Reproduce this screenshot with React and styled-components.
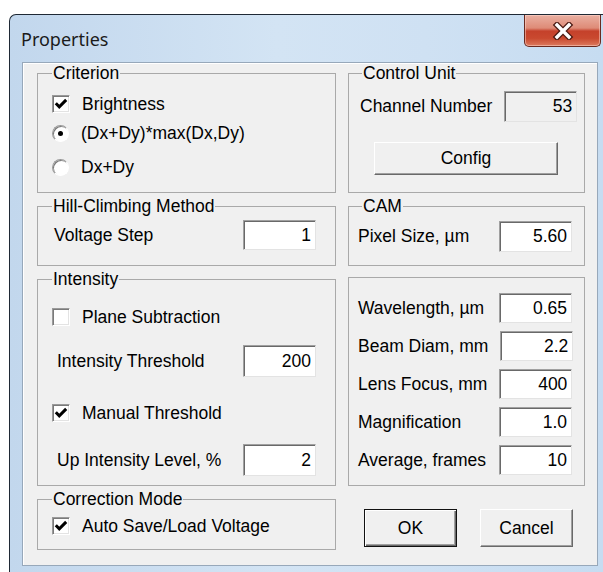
import React from "react";
import styled, { createGlobalStyle } from "styled-components";

// Properties dialog: classic Win32 controls inside a Win7 window frame

const GlobalStyle = createGlobalStyle`
  body {
    margin: 0;
    background: #fff;
    font-family: "Liberation Sans", Arial, sans-serif;
  }
`;

const Window = styled.div`
  box-sizing: border-box;
  margin: 14px 0 0 9px;
  width: 594px;
  height: 558px;
  border-top: 1px solid #1f2935;
  border-left: 1px solid #1f2935;
  border-top-left-radius: 7px;
  background: linear-gradient(90deg, #c2d7ed 0%, #d3e4f4 45%, #cfe1f3 70%, #c6dcf1 100%);
  padding: 0 5px 6px 12px;
  display: flex;
  flex-direction: column;
`;

const TitleBar = styled.div`
  height: 47px;
  display: flex;
  justify-content: space-between;
  align-items: flex-start;
  margin: 0 -3px 0 -1px;
`;

const Title = styled.div`
  padding-top: 13px;
  font-family: "Noto Sans", "Open Sans", sans-serif;
  font-size: 18px;
  line-height: 22px;
  color: #1b1b1b;
`;

const CloseButton = styled.div`
  box-sizing: border-box;
  width: 77px;
  height: 32px;
  border: 1px solid #6a2a20;
  border-top: none;
  border-radius: 0 0 5px 5px;
  background: linear-gradient(
    180deg,
    #eab0a2 0%,
    #de8b77 42%,
    #c5412b 52%,
    #c9492f 75%,
    #dc7a5e 100%
  );
  box-shadow: inset 0 0 0 1px rgba(255, 220, 210, 0.5);
  display: flex;
  align-items: center;
  justify-content: center;
`;

const Client = styled.div`
  flex: 1;
  box-sizing: border-box;
  background: #f0f0f0;
  border: 1px solid #97a8ba;
  box-shadow: inset 1px 1px 0 #fff;
  padding: 0 12px 0 14px;
  display: grid;
  grid-template-columns: 299px 237px;
  grid-template-rows: 130px 70px 217px 61px;
  column-gap: 12px;
  row-gap: 3px;
`;

const Group = styled.fieldset`
  box-sizing: border-box;
  margin: ${(p) => p.$mt || 0}px 0 0 0;
  min-width: 0;
  border: 1px solid #a9a9a9;
  padding: ${(p) => p.$pt || 0}px ${(p) => p.$pr || 12}px 0 ${(p) => p.$pl || 14}px;
  display: flex;
  flex-direction: column;
  gap: ${(p) => p.$gap || 0}px;
`;

const Legend = styled.legend`
  padding: 0 1px;
  margin-left: ${(p) => p.$ml || 0}px;
  font-size: 17.5px;
  line-height: 20px;
  color: #000;
`;

const Row = styled.div`
  display: flex;
  align-items: center;
  justify-content: ${(p) => (p.$spread ? "space-between" : p.$center ? "center" : "flex-start")};
  height: ${(p) => p.$h || 28}px;
  margin-top: ${(p) => p.$mt || 0}px;
  gap: 12px;
`;

const Label = styled.span`
  font-size: 17.5px;
  color: #000;
  padding-left: ${(p) => p.$pl || 0}px;
  white-space: nowrap;
`;

const Field = styled.input`
  box-sizing: border-box;
  width: 73px;
  height: ${(p) => p.$h || 31}px;
  margin: 0;
  padding: 0 4px 0 0;
  text-align: right;
  font-family: "Liberation Sans", Arial, sans-serif;
  font-size: 17.5px;
  color: #000;
  background: ${(p) => (p.$grey ? "#f0f0f0" : "#fff")};
  border: 1px solid;
  border-color: #a0a0a0 #e3e3e3 #e3e3e3 #a0a0a0;
  box-shadow: inset 1px 1px 0 #696969;
  outline: none;
`;

const Box = styled.span`
  box-sizing: border-box;
  width: 18px;
  height: 18px;
  flex: none;
  background: #fff;
  border: 1px solid;
  border-color: #9a9a9a #fff #fff #9a9a9a;
  box-shadow: inset 1px 1px 0 #7a7a7a, inset -1px -1px 0 #e3e3e3;
  display: flex;
  align-items: center;
  justify-content: center;
`;

const Round = styled.span`
  box-sizing: border-box;
  width: 17px;
  height: 17px;
  flex: none;
  border-radius: 50%;
  background: #fff;
  border: 1px solid;
  border-color: #9a9a9a #fff #fff #9a9a9a;
  box-shadow: inset 1px 1px 0 #7a7a7a;
  display: flex;
  align-items: center;
  justify-content: center;
`;

const Dot = styled.span`
  width: 5px;
  height: 5px;
  border-radius: 50%;
  background: #000;
`;

const Button = styled.button`
  box-sizing: border-box;
  width: ${(p) => p.$w || 93}px;
  height: ${(p) => p.$h || 38}px;
  margin: 0;
  padding: 0;
  font-family: "Liberation Sans", Arial, sans-serif;
  font-size: 17.5px;
  color: #000;
  background: #f0f0f0;
  border: 1px solid;
  border-color: ${(p) => (p.$default ? "#111" : "#fff #696969 #696969 #fff")};
  box-shadow: ${(p) =>
    p.$default
      ? "inset 1px 1px 0 #fff, inset -1px -1px 0 #696969, inset -2px -2px 0 #a0a0a0"
      : "inset -1px -1px 0 #a0a0a0"};
`;

const ButtonBar = styled.div`
  display: flex;
  gap: 23px;
  padding: 20px 0 0 16px;
`;

const CloseGlyph = () => (
  <svg width="22" height="18" viewBox="0 0 22 18">
    <path d="M5 3 L17 15 M17 3 L5 15" stroke="#4a1a12" strokeWidth="6" strokeLinecap="square" />
    <path d="M5 3 L17 15 M17 3 L5 15" stroke="#fff" strokeWidth="3.4" strokeLinecap="square" />
  </svg>
);

const Check = ({ checked, children, mt }) => (
  <Row $mt={mt}>
    <Box>
      {checked && (
        <svg width="14" height="14" viewBox="0 0 14 14">
          <path d="M1.8 6.2 L5.3 9.8 L12.2 2.9" fill="none" stroke="#000" strokeWidth="3" />
        </svg>
      )}
    </Box>
    <Label>{children}</Label>
  </Row>
);

const Radio = ({ checked, children, mt }) => (
  <Row $mt={mt}>
    <Round>{checked && <Dot />}</Round>
    <Label>{children}</Label>
  </Row>
);

const ValueRow = ({ label, value, mt, pl, h, grey }) => (
  <Row $spread $mt={mt} $h={h || 31}>
    <Label $pl={pl}>{label}</Label>
    <Field readOnly defaultValue={value} $grey={grey} $h={h} />
  </Row>
);

const optics = [
  ["Wavelength, µm", "0.65"],
  ["Beam Diam, mm", "2.2"],
  ["Lens Focus, mm", "400"],
  ["Magnification", "1.0"],
  ["Average, frames", "10"],
];

export default function App() {
  return (
    <>
      <GlobalStyle />
      <Window>
        <TitleBar>
          <Title>Properties</Title>
          <CloseButton>
            <CloseGlyph />
          </CloseButton>
        </TitleBar>
        <Client>
          <Group>
            <Legend>Criterion</Legend>
            <Check checked mt={7}>Brightness</Check>
            <Radio checked mt={1}>(Dx+Dy)*max(Dx,Dy)</Radio>
            <Radio mt={6}>Dx+Dy</Radio>
          </Group>

          <Group $pl={11} $pr={12}>
            <Legend $ml={2}>Control Unit</Legend>
            <ValueRow label="Channel Number" value="53" mt={8} grey />
            <Row $center $mt={20} $h={33}>
              <Button $w={184} $h={33}>Config</Button>
            </Row>
          </Group>

          <Group $pr={19}>
            <Legend>Hill-Climbing Method</Legend>
            <ValueRow label="Voltage Step" value="1" mt={4} pl={2} h={30} />
          </Group>

          <Group $pl={9} $pr={12}>
            <Legend $ml={4}>CAM</Legend>
            <ValueRow label="Pixel Size, µm" value="5.60" mt={5} />
          </Group>

          <Group $pr={19}>
            <Legend>Intensity</Legend>
            <Check mt={14}>Plane Subtraction</Check>
            <ValueRow label="Intensity Threshold" value="200" mt={14} pl={5} h={32} />
            <Check checked mt={22}>Manual Threshold</Check>
            <ValueRow label="Up Intensity Level, %" value="2" mt={17} pl={5} h={32} />
          </Group>

          <Group $mt={8} $pt={15} $pl={9} $pr={12} $gap={8}>
            {optics.map(([label, value]) => (
              <ValueRow key={label} label={label} value={value} h={30} />
            ))}
          </Group>

          <Group>
            <Legend>Correction Mode</Legend>
            <Check checked mt={3}>Auto Save/Load Voltage</Check>
          </Group>

          <ButtonBar>
            <Button $default>OK</Button>
            <Button>Cancel</Button>
          </ButtonBar>
        </Client>
      </Window>
    </>
  );
}
